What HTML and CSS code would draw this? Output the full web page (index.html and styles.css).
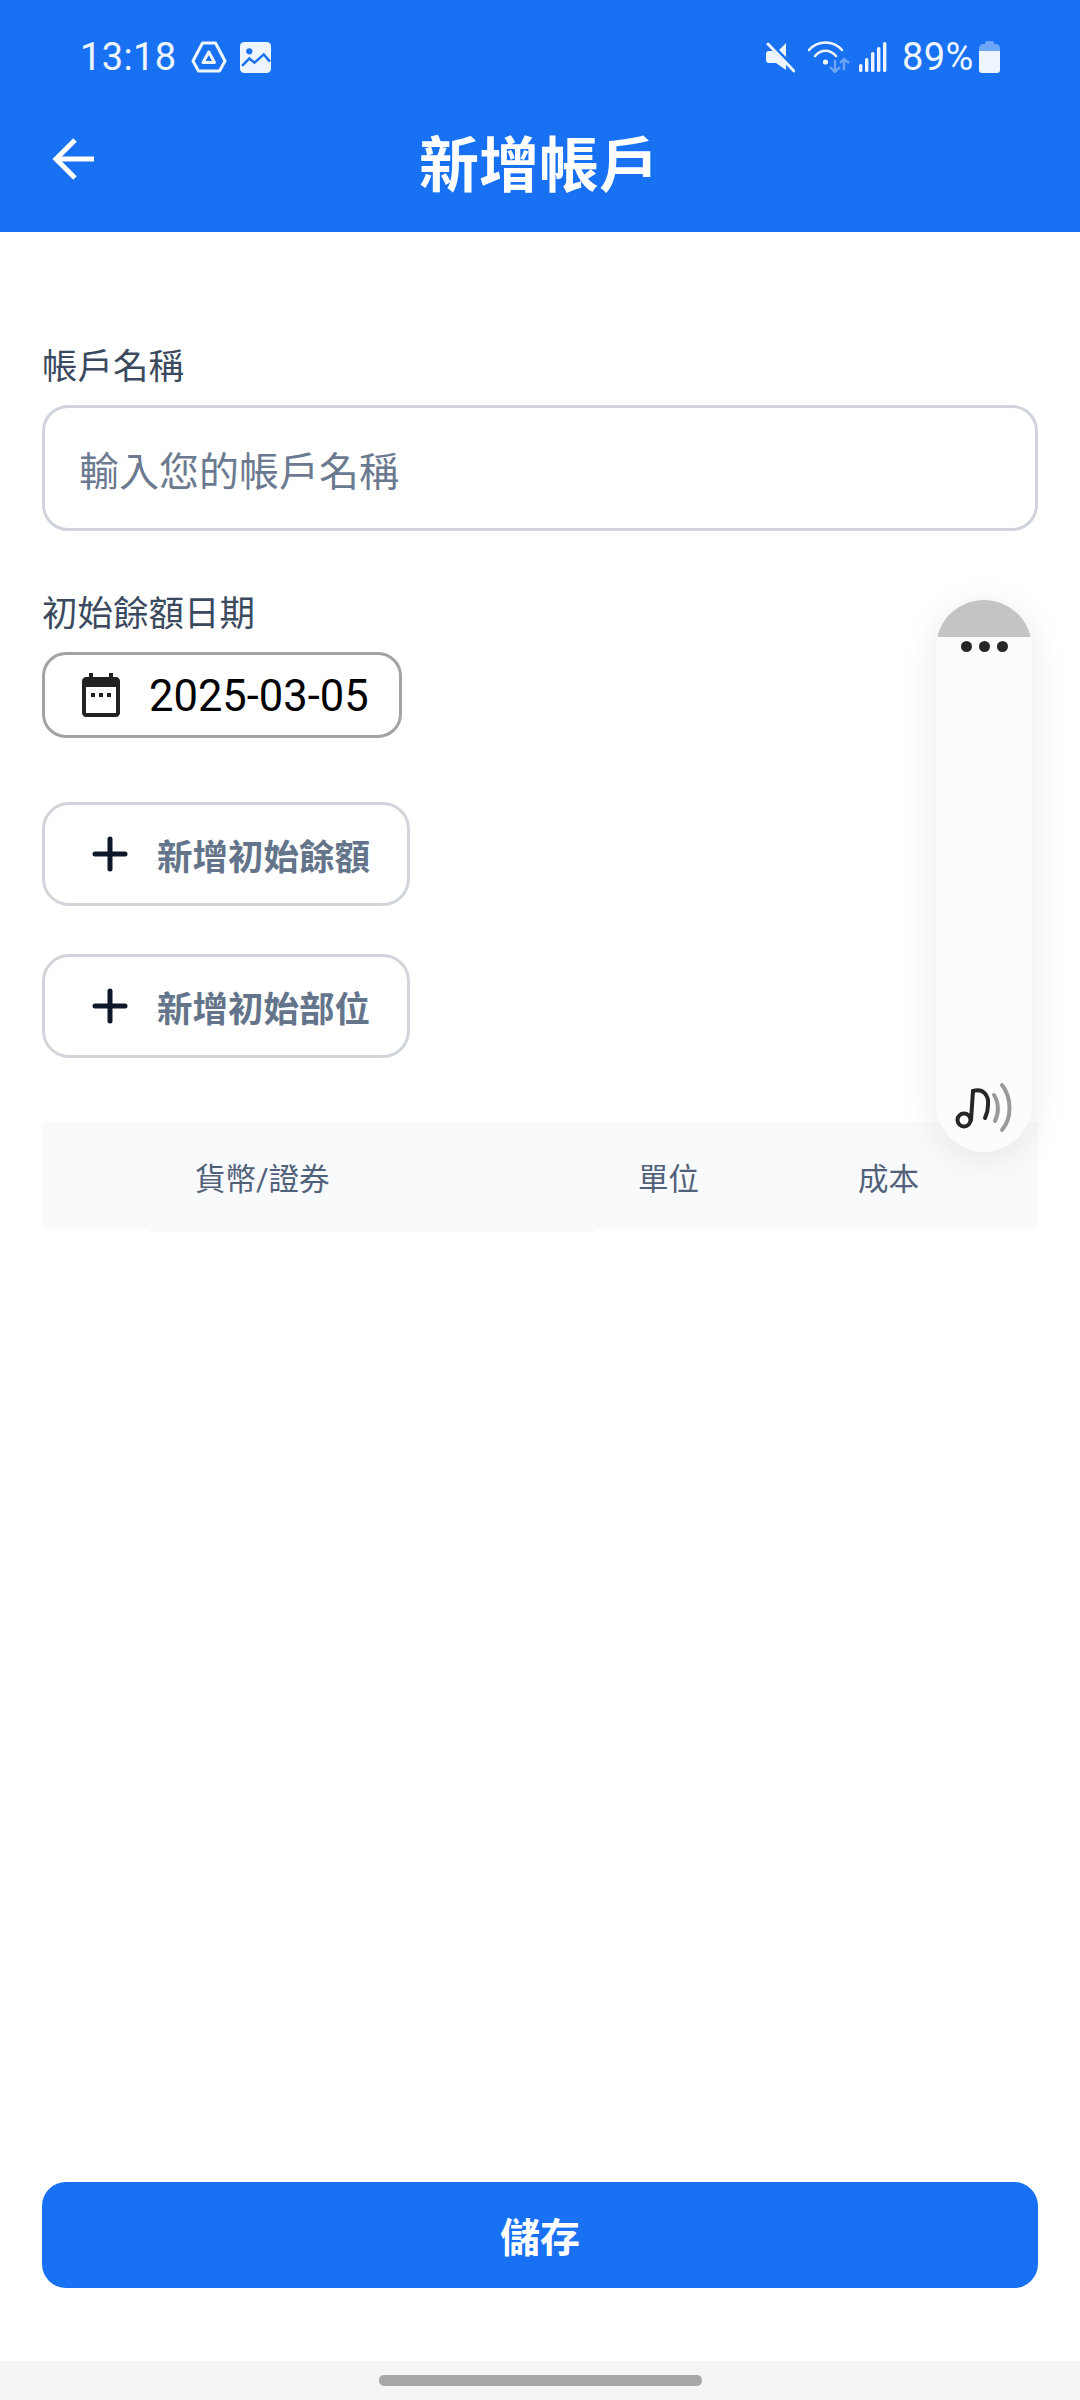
FILE: index.html
```html
<!DOCTYPE html>
<html lang="zh-Hant">
<head>
    <meta charset="UTF-8">
    <meta name="viewport" content="width=device-width, initial-scale=1.0">
    <title>新增帳戶</title>
    <link rel="stylesheet" href="styles.css">
</head>
<body>
    <div class="page">
        <header class="app-header">
            <!-- Status bar -->
            <div class="status-bar">
                <div class="status-left">
                    <span class="status-time">13:18</span>
                    <svg class="icon-drive" viewBox="0 0 36 32" fill="none" stroke="#eef5fe" stroke-width="3" stroke-linejoin="round">
                        <path d="M11.5 2H24.5L34 20L28.5 30H7.5L2 20Z"/>
                        <path d="M17.8 11L23.5 21.5H12Z"/>
                    </svg>
                    <svg class="icon-picture" viewBox="0 0 30 30">
                        <rect width="30" height="30" rx="4" fill="#eef5fe"/>
                        <circle cx="9" cy="9" r="3" fill="#1871f2"/>
                        <path d="M2 23L9 16L14 20L23 12L29 19" fill="none" stroke="#1871f2" stroke-width="2.4"/>
                    </svg>
                </div>
                <div class="status-right">
                    <svg class="icon-mute" viewBox="0 0 30 32">
                        <path d="M1 13C1 11 2 10 4 10H8L21 23V29L11 22H4C2 22 1 21 1 19ZM14 9L21 2V16Z" fill="#eef5fe"/>
                        <path d="M3 3L29 30" stroke="#eef5fe" stroke-width="3" stroke-linecap="round"/>
                    </svg>
                    <svg class="icon-wifi" viewBox="0 0 43 32" fill="none">
                        <path d="M1 9C10 -1 25 -1 34 9" stroke="#eef5fe" stroke-width="2.6" stroke-linecap="round"/>
                        <path d="M7 15C13 8 22 8 28 15" stroke="#eef5fe" stroke-width="2.6" stroke-linecap="round"/>
                        <circle cx="17.5" cy="21" r="2.6" fill="#eef5fe"/>
                        <path d="M27 19V31M22 26L27 31L32 26M36 29V18M32 22L36 18L41 22" stroke="#6da5f6" stroke-width="2.4"/>
                    </svg>
                    <svg class="icon-signal" viewBox="0 0 28 30" fill="#eef5fe">
                        <rect x="0" y="22" width="3.4" height="8" rx="1.5"/>
                        <rect x="6" y="16" width="3.4" height="14" rx="1.5"/>
                        <rect x="12" y="10" width="3.4" height="20" rx="1.5"/>
                        <rect x="18" y="5" width="3.4" height="25" rx="1.5"/>
                        <rect x="24" y="0" width="3.4" height="30" rx="1.5"/>
                    </svg>
                    <span class="status-battery">89%</span>
                    <svg class="icon-battery" viewBox="0 0 21 32">
                        <path d="M6 3C6 1 7 0 8 0H13C14 0 15 1 15 3H17C19 3 21 5 21 7V10H0V7C0 5 2 3 4 3Z" fill="#6da5f6"/>
                        <path d="M0 10H21V29C21 31 20 32 18 32H3C1 32 0 31 0 29Z" fill="#eef5fe"/>
                    </svg>
                </div>
            </div>
            <!-- Title bar -->
            <div class="title-bar">
                <svg class="icon-back" viewBox="0 0 42 44" fill="none" stroke="#ffffff" stroke-width="5">
                    <path d="M42 22H4M23 3L4 22L23 41"/>
                </svg>
                <h1 class="page-title">新增帳戶</h1>
            </div>
        </header>

        <main class="content">
            <label class="field-label" for="account-name">帳戶名稱</label>
            <div class="text-input" id="account-name">輸入您的帳戶名稱</div>

            <div class="field-label date-label">初始餘額日期</div>
            <div class="date-button">
                <svg class="icon-calendar" viewBox="0 0 38 44">
                    <path d="M7 0H11V4H27V0H31V4H34C36 4 38 6 38 8V40C38 42 36 44 34 44H4C2 44 0 42 0 40V8C0 6 2 4 4 4H7ZM4 14V40H34V14Z" fill="#212121"/>
                    <rect x="9" y="20" width="4" height="4" fill="#212121"/>
                    <rect x="17" y="20" width="4" height="4" fill="#212121"/>
                    <rect x="25" y="20" width="4" height="4" fill="#212121"/>
                </svg>
                <span class="date-text">2025-03-05</span>
            </div>

            <div class="add-button add-first">
                <svg class="icon-plus" viewBox="0 0 36 36" stroke="#0f172a" stroke-width="5" stroke-linecap="round">
                    <path d="M18 3V33M3 18H33"/>
                </svg>
                <span>新增初始餘額</span>
            </div>
            <div class="add-button">
                <svg class="icon-plus" viewBox="0 0 36 36" stroke="#0f172a" stroke-width="5" stroke-linecap="round">
                    <path d="M18 3V33M3 18H33"/>
                </svg>
                <span>新增初始部位</span>
            </div>

            <!-- Holdings table header -->
            <div class="table-header">
                <div class="cell"></div>
                <div class="cell cell-name">貨幣/證券</div>
                <div class="cell">單位</div>
                <div class="cell">成本</div>
            </div>

            <button class="save-button" type="button">儲存</button>
        </main>

        <div class="nav-bar">
            <div class="nav-handle"></div>
        </div>

        <!-- Floating sound panel -->
        <div class="float-panel">
            <div class="float-cap"></div>
            <div class="float-dots"><i></i><i></i><i></i></div>
            <svg class="icon-music" viewBox="0 0 66 56" fill="none" stroke-linecap="round">
                <circle cx="14" cy="40" r="6.5" stroke="#262626" stroke-width="4"/>
                <path d="M21 40L23 11C33 8 39 15 38 25C38 30 37 34 35 38" stroke="#262626" stroke-width="4"/>
                <path d="M44 15C49 23 49 33 45 41" stroke="#9a9a9a" stroke-width="4"/>
                <path d="M52 5C62 18 62 38 52 50" stroke="#9a9a9a" stroke-width="4"/>
            </svg>
        </div>
    </div>
</body>
</html>
```

FILE: styles.css
```css
/* General Page Styles */
html, body {
    margin: 0;
    padding: 0;
    background: #ffffff;
}

.page {
    position: relative;
    width: 1080px;
    height: 2400px;
    display: flex;
    flex-direction: column;
    overflow: hidden;
    font-family: Roboto, "Noto Sans CJK TC", sans-serif;
}

/* Header Styles */
.app-header {
    background: #1871f2;
    height: 232px;
    flex-shrink: 0;
}

.status-bar {
    height: 114px;
    box-sizing: border-box;
    padding: 0 80px;
    display: flex;
    justify-content: space-between;
    align-items: center;
    color: #eef5fe;
}

.status-left,
.status-right {
    display: flex;
    align-items: center;
}

.status-time {
    font-size: 38px;
    line-height: 44px;
    width: 111px;
    letter-spacing: 0.4px;
}

.icon-drive {
    width: 36px;
    height: 32px;
}

.icon-picture {
    width: 31px;
    height: 31px;
    margin-left: 13px;
}

.icon-mute {
    width: 30px;
    height: 32px;
}

.icon-wifi {
    width: 43px;
    height: 32px;
    margin-left: 13px;
}

.icon-signal {
    width: 28px;
    height: 30px;
    margin-left: 8px;
}

.status-battery {
    font-size: 38px;
    line-height: 44px;
    margin-left: 15px;
    width: 77px;
    letter-spacing: 0.4px;
    white-space: nowrap;
}

.icon-battery {
    width: 21px;
    height: 32px;
}

.title-bar {
    position: relative;
    height: 118px;
    display: flex;
    align-items: center;
    justify-content: center;
}

.icon-back {
    position: absolute;
    left: 52px;
    top: 23px;
    width: 42px;
    height: 44px;
}

.page-title {
    margin: 0 2px 0 0;
    color: #ffffff;
    font-size: 60px;
    line-height: 70px;
    font-weight: 700;
    position: relative;
    top: -6px;
}

/* Form Styles */
.content {
    flex: 1;
    display: flex;
    flex-direction: column;
    padding: 110px 42px 73px;
    min-height: 0;
}

.field-label {
    display: block;
    color: #3b4a5e;
    font-size: 35.5px;
    line-height: 50px;
    margin-bottom: 13px;
}

.text-input {
    height: 126px;
    box-sizing: border-box;
    border: 3px solid #d1d5db;
    border-radius: 26px;
    padding: 2px 34px 0;
    display: flex;
    align-items: center;
    color: #6b7a90;
    font-size: 40px;
}

.date-label {
    margin-top: 58px;
}

.date-button {
    width: 360px;
    height: 86px;
    box-sizing: border-box;
    border: 3px solid #a3a3a3;
    border-radius: 24px;
    padding-left: 37px;
    display: flex;
    align-items: center;
}

.icon-calendar {
    width: 38px;
    height: 44px;
}

.date-text {
    margin-left: 29px;
    margin-top: 2px;
    color: #000000;
    font-size: 43.5px;
}

.add-button {
    width: 368px;
    height: 104px;
    box-sizing: border-box;
    border: 3px solid #d1d5db;
    border-radius: 27px;
    padding-left: 47px;
    margin-top: 48px;
    display: flex;
    align-items: center;
    color: #64748b;
    font-size: 35.5px;
    font-weight: 700;
}

.add-first {
    margin-top: 64px;
}

.icon-plus {
    width: 36px;
    height: 36px;
    margin-right: 29px;
}

/* Table Header Styles */
.table-header {
    display: grid;
    grid-template-columns: 106px 447px 220px 223px;
    height: 107px;
    margin-top: 64px;
    background: #f8fafc;
    color: #52617a;
    font-size: 30.5px;
}

.cell {
    display: flex;
    align-items: center;
    padding: 3px 0 0 43px;
}

.cell-name {
    padding: 3px 0 3px 47px;
    background: #f8fafc;
    margin-bottom: -3px;
}

/* Save Button Styles */
.save-button {
    margin-top: auto;
    height: 106px;
    border: none;
    border-radius: 24px;
    background: #1871f2;
    color: #ffffff;
    font-family: inherit;
    font-size: 40px;
    font-weight: 700;
}

/* Navigation Bar */
.nav-bar {
    height: 39px;
    flex-shrink: 0;
    background: #f5f5f5;
    display: flex;
    justify-content: center;
    padding-top: 14px;
    box-sizing: border-box;
}

.nav-handle {
    width: 323px;
    height: 11px;
    border-radius: 5px;
    background: #a8a8a8;
}

/* Floating Panel */
.float-panel {
    position: absolute;
    left: 936px;
    top: 600px;
    width: 96px;
    height: 552px;
    border-radius: 48px;
    background: #fcfcfc;
    box-shadow: 0 6px 36px rgba(0, 0, 0, 0.09);
    overflow: hidden;
}

.float-cap {
    height: 37px;
    background: #c4c4c4;
}

.float-dots {
    display: flex;
    justify-content: center;
    gap: 7px;
    margin-top: 4px;
}

.float-dots i {
    width: 11px;
    height: 11px;
    border-radius: 50%;
    background: #262626;
}

.icon-music {
    position: absolute;
    left: 14px;
    top: 480px;
    width: 66px;
    height: 56px;
}
```
